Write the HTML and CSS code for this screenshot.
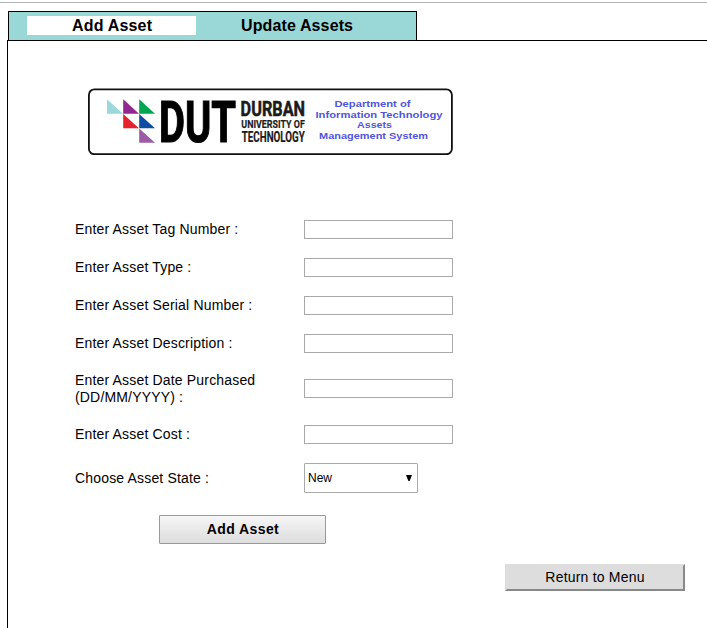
FILE: index.html
```html
<!DOCTYPE html>
<html lang="en">
<head>
<meta charset="utf-8">
<title>Assets Management System</title>
<link rel="stylesheet" href="styles.css">
</head>
<body>
<nav class="tabs">
  <a class="tab active"><svg width="169" height="19"><text x="45" y="15" textLength="80">Add Asset</text></svg></a>
  <a class="tab"><svg width="169" height="19"><text x="45" y="15" textLength="112">Update Assets</text></svg></a>
</nav>
<main class="panel">
  <svg class="logo" width="365" height="67" viewBox="88 88 365 67">
    <rect x="88.9" y="89.4" width="363" height="64.8" rx="5.5" fill="#fff" stroke="#111" stroke-width="1.8"/>
    <path fill="#9ad8db" d="M107 99.3V113.7H123z"/>
    <path fill="#92278f" d="M123.2 99.3V113.7H139z"/>
    <path fill="#00a550" d="M139.2 99.3V113.7H155z"/>
    <path fill="#e6222c" d="M123.2 113.9V128.2H139z"/>
    <path fill="#0b4ea2" d="M139.2 113.9V128.2H155z"/>
    <path fill="#9b5ba5" d="M139.2 128.4V142.8H155z"/>
    <g class="brand">
      <text class="dut" x="159" y="141.5" textLength="77" lengthAdjust="spacingAndGlyphs">DUT</text>
      <text class="durban" x="240.6" y="116" textLength="64.5" lengthAdjust="spacingAndGlyphs">DURBAN</text>
      <text class="university" x="241.3" y="128.3" textLength="63.5" lengthAdjust="spacingAndGlyphs">UNIVERSITY OF</text>
      <text class="technology" x="241.8" y="142" textLength="63" lengthAdjust="spacingAndGlyphs">TECHNOLOGY</text>
    </g>
    <g class="dept">
      <text x="334.5" y="107" textLength="76" lengthAdjust="spacingAndGlyphs">Department of</text>
      <text x="315.5" y="117.8" textLength="127" lengthAdjust="spacingAndGlyphs">Information Technology</text>
      <text x="357" y="128.2" textLength="35" lengthAdjust="spacingAndGlyphs">Assets</text>
      <text x="319" y="139" textLength="109" lengthAdjust="spacingAndGlyphs">Management System</text>
    </g>
  </svg>
  <form class="form">
    <label for="tag">Enter Asset Tag Number :</label><input id="tag" type="text">
    <label for="type">Enter Asset Type :</label><input id="type" type="text">
    <label for="serial">Enter Asset Serial Number :</label><input id="serial" type="text">
    <label for="desc">Enter Asset Description :</label><input id="desc" type="text">
    <label for="date">Enter Asset Date Purchased<br>(DD/MM/YYYY) :</label><input id="date" type="text">
    <label for="cost">Enter Asset Cost :</label><input id="cost" type="text">
    <label for="state">Choose Asset State :</label>
    <div class="select" id="state"><span>New</span><svg width="6" height="6"><path d="M0 0H6L3.6 6H2.4z"/></svg></div>
  </form>
  <button class="add" type="button">Add Asset</button>
  <button class="return" type="button">Return to Menu</button>
</main>
</body>
</html>
```
FILE: styles.css
```css
* { box-sizing: border-box; }
html { overflow: hidden; }
body {
  margin: 0;
  padding-top: 11px;
  height: 628px;
  overflow: hidden;
  background: linear-gradient(#b4b4b4, #b4b4b4) 0 2px / 100% 1px no-repeat #fff;
  font-family: "Liberation Sans", Arial, sans-serif;
  color: #000;
}
.tabs {
  display: flex;
  width: 409px;
  height: 29px;
  margin-left: 8px;
  padding: 4px 0 0 18px;
  border: 1px solid #000;
  border-bottom: 0;
  background: #9ad8d8;
}
.tab { display: block; width: 169px; height: 19px; font-size: 16px; font-weight: bold; }
.tab svg { display: block; }
.active { background: #fff; }
.panel {
  display: flex;
  flex-direction: column;
  height: 588px;
  margin-left: 7px;
  border: 1px solid #000;
  border-right: 0;
  border-bottom: 0;
}
.logo { display: block; flex: none; margin: 47px 0 0 80px; }
.brand { font-family: Roboto, sans-serif; font-weight: bold; fill: #1c1a1b; stroke: #1c1a1b; stroke-width: 0.2; }
.dut { font-size: 58px; fill: #000; stroke: #000; stroke-width: 1.2; }
.durban { font-size: 19.5px; stroke-width: 0.5; }
.university { font-size: 11.6px; }
.technology { font-size: 14.3px; }
.dept { font-size: 9.6px; font-weight: bold; fill: #4f55dc; }
.form {
  display: grid;
  grid-template-columns: 229px 149px;
  grid-template-rows: 38px 38px 38px 38px 53px 39px 48px;
  align-items: center;
  margin: 55px 0 0 67px;
  font-size: 14px;
  line-height: 17px;
  letter-spacing: 0.17px;
}
.form input {
  width: 149px;
  height: 19px;
  margin: 0;
  padding: 1px;
  border: 1px solid #a9a9a9;
  background: #fff;
}
.select {
  display: flex;
  align-items: center;
  justify-content: space-between;
  width: 114px;
  height: 30px;
  padding: 0 5px 0 3px;
  border: 1px solid #a9a9a9;
  border-radius: 1px;
  font-size: 12px;
  letter-spacing: 0;
}
.add {
  width: 167px;
  height: 29px;
  margin: 13px 0 0 151px;
  padding: 0 0 2px 1px;
  border: 1px solid #999;
  border-radius: 1px;
  background: linear-gradient(#f6f6f6, #dddddd);
  font: bold 14px "Liberation Sans", Arial, sans-serif;
  letter-spacing: 0.4px;
  color: #000;
}
.return {
  width: 180px;
  height: 27px;
  margin: 20px 0 0 497px;
  padding: 0 0 2px;
  border: 2px solid;
  border-color: #ddd #888 #888 #ddd;
  background: #ddd;
  font: 14px "Liberation Sans", Arial, sans-serif;
  letter-spacing: 0.2px;
  color: #000;
}
```
